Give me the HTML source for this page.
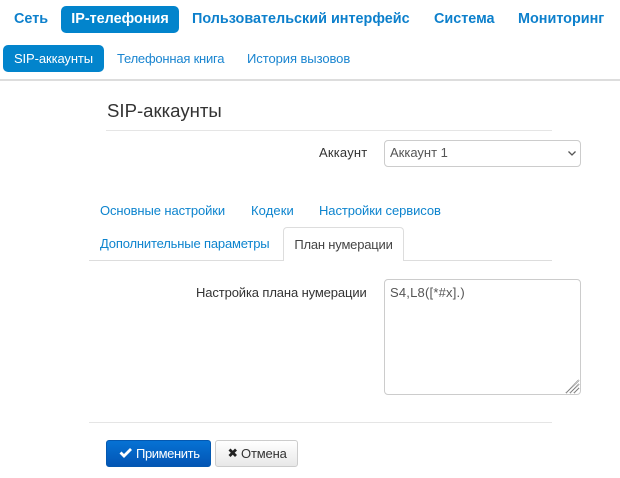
<!DOCTYPE html>
<html><head><meta charset="utf-8"><style>
html,body{margin:0;padding:0;background:#fff}
body{width:620px;height:478px;position:relative;overflow:hidden;font-family:"Liberation Sans",sans-serif;font-size:13px;color:#333}
.a{position:absolute;white-space:nowrap}
.n{font-weight:bold;font-size:14.4px;color:#0d80cc;top:6px;height:27px;line-height:27px}
.s{color:#1a85d0;top:45px;height:27px;line-height:27px}
.t{color:#0d84ce;line-height:18px}
.r{position:absolute;box-sizing:border-box;background:#fff;border:1px solid #ccc;border-radius:4px}
.l{position:absolute;height:1px;background:#e5e5e5}
</style></head><body>
<div class="a n" style="left:14px">Сеть</div>
<div class="a n" style="left:61px;width:118px;text-align:center;background:#0284cc;color:#fff;border-radius:5px">IP-телефония</div>
<div class="a n" style="left:192px">Пользовательский интерфейс</div>
<div class="a n" style="left:434px">Система</div>
<div class="a n" style="left:518px">Мониторинг</div>
<div class="a s" style="left:3px;width:101px;text-align:center;background:#0284cc;color:#fff;border-radius:5px;letter-spacing:-.1px">SIP-аккаунты</div>
<div class="a s" style="left:117px;letter-spacing:-.22px">Телефонная книга</div>
<div class="a s" style="left:247px;letter-spacing:-.07px">История вызовов</div>
<div class="a" style="left:0;top:79px;width:620px;height:2px;background:#ddd"></div>
<div class="a" style="left:107px;top:100px;font-size:18.6px;line-height:22px;color:#333">SIP-аккаунты</div>
<div class="l" style="left:106px;top:130px;width:446px"></div>
<div class="a" style="left:319px;top:144px;line-height:18px;letter-spacing:.2px">Аккаунт</div>
<div class="r" style="left:384px;top:140px;width:197px;height:27px"></div>
<div class="a" style="left:390px;top:144px;line-height:18px;color:#555">Аккаунт 1</div>
<svg class="a" style="left:567px;top:150px" width="11" height="7" viewBox="0 0 11 7"><path d="M1.500 1.500 5 5l3.500-3.500" fill="none" stroke="#555" stroke-width="1.300"/></svg>
<div class="a t" style="left:100px;top:202px;letter-spacing:-.1px">Основные настройки</div>
<div class="a t" style="left:251px;top:202px;letter-spacing:.1px">Кодеки</div>
<div class="a t" style="left:319px;top:202px;letter-spacing:-.08px">Настройки сервисов</div>
<div class="a t" style="left:100px;top:235px;letter-spacing:-.17px">Дополнительные параметры</div>
<div class="l" style="left:89px;top:260px;width:463px;background:#ddd"></div>
<div class="a" style="left:283px;top:227px;width:121px;height:34px;box-sizing:border-box;background:#fff;border:1px solid #ddd;border-bottom:0;border-radius:4px 4px 0 0;text-align:center;line-height:33px;color:#444;letter-spacing:-.2px">План нумерации</div>
<div class="a" style="left:196px;top:284px;line-height:18px;letter-spacing:-.12px">Настройка плана нумерации</div>
<div class="r" style="left:384px;top:279px;width:197px;height:116px"></div>
<div class="a" style="left:390px;top:284px;line-height:18px;color:#555;letter-spacing:.2px">S4,L8([*#x].)</div>
<svg class="a" style="left:564px;top:378px" width="16" height="16" viewBox="0 0 16 16"><path d="M2 15 15 2M6 15 15 6M10 15 15 10" stroke="#777" stroke-width="1.500" stroke-dasharray="1 .5" fill="none"/></svg>
<div class="l" style="left:89px;top:422px;width:463px"></div>
<div class="a" style="left:106px;top:440px;width:105px;height:27px;box-sizing:border-box;border:1px solid #0458b0;border-radius:3px;background:linear-gradient(#0672d4,#0355b4);color:#fff;line-height:25px;padding-left:29px;letter-spacing:-.4px">Применить</div>
<svg class="a" style="left:118px;top:447px" width="15" height="12" viewBox="0 0 15 12"><path d="M2.500 5.500l3.500 3.500 7-7" fill="none" stroke="#fff" stroke-width="2.800"/></svg>
<div class="a" style="left:215px;top:440px;width:83px;height:27px;box-sizing:border-box;border:1px solid #ccc;border-radius:3px;background:linear-gradient(#fff,#e8e8e8);color:#333;line-height:25px;padding-left:25px;letter-spacing:-.15px">Отмена</div>
<svg class="a" style="left:227px;top:448px" width="11" height="10" viewBox="0 0 11 10"><path d="M2.500 1.500l6.500 6.500M9 1.500 2.500 8" fill="none" stroke="#222" stroke-width="2.800"/></svg>
</body></html>
